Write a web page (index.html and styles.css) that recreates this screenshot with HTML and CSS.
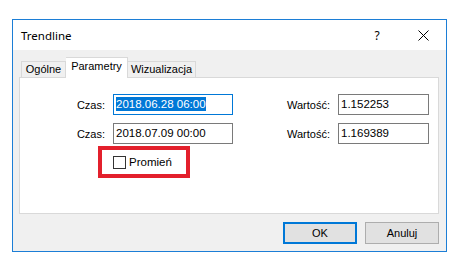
FILE: index.html
```html
<!DOCTYPE html>
<html lang="pl">

<head>
    <meta charset="UTF-8">
    <title>Trendline</title>
    <link rel="stylesheet" href="styles.css">
</head>

<body>
    <div class="window">
        <!-- pasek tytułu -->
        <div class="titlebar">
            <span class="title">Trendline</span>
            <span class="tb-btn help">?</span>
            <span class="tb-btn close">
                <svg width="11" height="11" viewBox="0 0 11 11">
                    <path d="M0.5 0.5 L10.5 10.5 M10.5 0.5 L0.5 10.5" stroke="#000" stroke-width="1" fill="none" />
                </svg>
            </span>
        </div>

        <div class="content">
            <div class="tabs">
                <div class="tab">Ogólne</div>
                <div class="tab active">Parametry</div>
                <div class="tab">Wizualizacja</div>
            </div>

            <div class="panel">
                <div class="row">
                    <span class="label lbl-czas">Czas:</span>
                    <div class="field field-time focused"><span class="sel">2018.06.28 06:00</span></div>
                    <span class="label lbl-wart">Wartość:</span>
                    <div class="field field-val">1.152253</div>
                </div>
                <div class="row row2">
                    <span class="label lbl-czas">Czas:</span>
                    <div class="field field-time">2018.07.09 00:00</div>
                    <span class="label lbl-wart">Wartość:</span>
                    <div class="field field-val">1.169389</div>
                </div>
                <div class="mark">
                    <span class="checkbox"></span>
                    <span class="check-label">Promień</span>
                </div>
            </div>

            <div class="buttons">
                <div class="btn default">OK</div>
                <div class="btn">Anuluj</div>
            </div>
        </div>
    </div>
</body>

</html>
```

FILE: styles.css
```css
body {
    margin: 0;
    background: #ffffff;
    font-family: "Liberation Sans", Arial, sans-serif;
    font-size: 11px;
    color: #000000;
}

.window {
    margin: 19px 0 0 12px;
    width: 435px;
    height: 233px;
    box-sizing: border-box;
    border: 1px solid #1c7ed6;
    background: #f0f0f0;
    display: flex;
    flex-direction: column;
}

.titlebar {
    height: 30px;
    background: #ffffff;
    display: flex;
    align-items: center;
    padding-left: 8px;
}

.title {
    font-family: "Noto Sans", "Open Sans", sans-serif;
    font-size: 11.5px;
    flex: 1;
}

.tb-btn {
    width: 46px;
    height: 30px;
    display: flex;
    align-items: center;
    justify-content: center;
}

.help {
    font-family: "Noto Sans", sans-serif;
    font-size: 12px;
}

.content {
    padding: 7px 7px 0 6px;
}

.tabs {
    display: flex;
    align-items: flex-end;
    height: 20px;
    padding-left: 2px;
}

.tab {
    height: 16px;
    line-height: 15px;
    box-sizing: border-box;
    border: 1px solid #d9d9d9;
    border-bottom: none;
    background: #f0f0f0;
    text-align: center;
}

.tab:nth-child(1) {
    width: 45px;
}

.tab:nth-child(3) {
    width: 68px;
    border-left: none;
}

.tab.active {
    width: 62px;
    height: 21px;
    line-height: 17px;
    margin-bottom: -1px;
    background: #ffffff;
    border-left: none;
    position: relative;
    z-index: 1;
}

.panel {
    height: 137px;
    box-sizing: border-box;
    border: 1px solid #d9d9d9;
    background: #ffffff;
    padding-top: 16px;
}

.row {
    display: flex;
    align-items: center;
    height: 21px;
}

.row2 {
    margin-top: 8px;
}

.label {
    text-align: right;
    margin-right: 8px;
}

.lbl-czas {
    width: 85px;
}

.lbl-wart {
    width: 97px;
}

.field {
    height: 21px;
    box-sizing: border-box;
    border: 1px solid #7a7a7a;
    padding-left: 2px;
    line-height: 19px;
    font-size: 11.5px;
    white-space: nowrap;
}

.field-time {
    width: 120px;
}

.field-val {
    width: 91px;
}

.focused {
    border-color: #0078d7;
}

.sel {
    background: #0078d7;
    color: #ffffff;
    padding: 1px 0;
}

.mark {
    margin: 2px 0 0 78px;
    width: 92px;
    height: 32px;
    box-sizing: border-box;
    border: 4px solid #e3202c;
    display: flex;
    align-items: center;
    padding-left: 11px;
}

.checkbox {
    width: 13px;
    height: 13px;
    box-sizing: border-box;
    border: 1px solid #333333;
    background: #ffffff;
}

.check-label {
    margin-left: 3px;
    font-size: 11.5px;
}

.buttons {
    display: flex;
    justify-content: flex-end;
    gap: 8px;
    margin-top: 8px;
}

.btn {
    width: 74px;
    height: 22px;
    box-sizing: border-box;
    border: 1px solid #adadad;
    background: #e1e1e1;
    display: flex;
    align-items: center;
    justify-content: center;
}

.btn.default {
    border: 2px solid #0078d7;
}
```
